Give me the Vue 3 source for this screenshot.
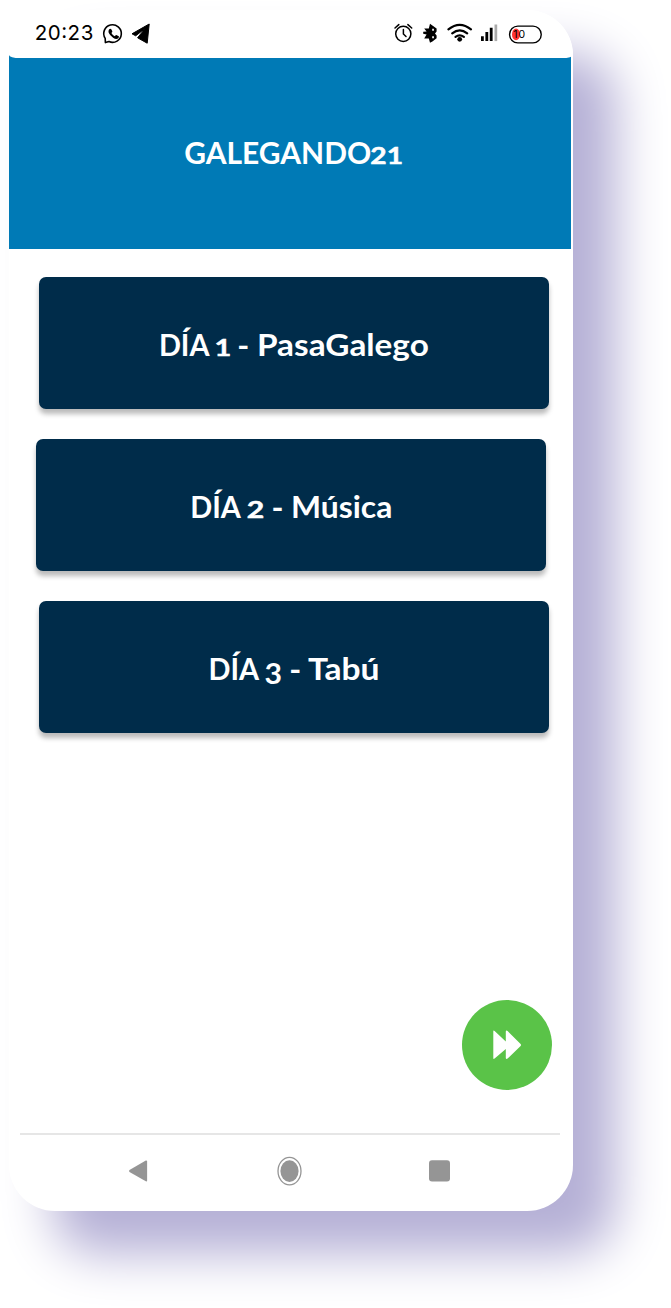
<script setup>
// Each label is set word by word: x, baseline, measured length and size.
const title = [
  { t: 'GALEGANDO', x: 175.2, y: 109, w: 187, s: 29.5 },
  { t: '21', x: 361.3, y: 109, w: 32.7, s: 23, small: true },
]

const days = [
  {
    id: 1,
    words: [
      { t: 'DÍA', x: 119.9, y: 79, w: 50.6, s: 30 },
      { t: '1', x: 175.4, y: 79, w: 16.8, s: 23, small: true },
      { t: '-', x: 198.3, y: 80, w: 12, s: 30 },
      { t: 'PasaGalego', x: 218, y: 79, w: 171.8, s: 30 },
    ],
  },
  {
    id: 2,
    shifted: true,
    words: [
      { t: 'DÍA', x: 154.2, y: 79, w: 50.6, s: 30 },
      { t: '2', x: 210.8, y: 79, w: 17.5, s: 23, small: true },
      { t: '-', x: 235.5, y: 80, w: 12, s: 30 },
      { t: 'Música', x: 255, y: 79, w: 101.3, s: 30 },
    ],
  },
  {
    id: 3,
    words: [
      { t: 'DÍA', x: 169.5, y: 79, w: 50.6, s: 30 },
      { t: '3', x: 225.5, y: 83, w: 17.5, s: 29 },
      { t: '-', x: 250.3, y: 80, w: 12, s: 30 },
      { t: 'Tabú', x: 269, y: 79, w: 71.5, s: 30 },
    ],
  },
]
</script>

<template>
  <div class="stage">
    <main class="phone">
      <div class="status">
        <svg class="status-left" width="130" height="30" viewBox="30 18 130 30">
          <text class="clock" x="34.8" y="40" textLength="58.5">20:23</text>
          <g fill="none" stroke="#000" stroke-width="1.6">
            <path d="M105.2 38.4 A8.8 8.8 0 1 1 109 41.6 L105.4 42.6 Z" stroke-linejoin="round" />
          </g>
          <path d="M109 29.5 q1.3 -1.5 2.3 -.3 l1 2 q.3 .8 -.9 1.8 q1.2 2.3 3.4 3.3 q1.2 -1.6 2 -1.1 l2 1.1 q.6 .7 -.5 1.9 q-2 1.6 -5.2 -.5 q-3.2 -2.2 -4.4 -5 q-.6 -1.9 .3 -3.2z" />
          <path d="M132 33.8 L149.2 24 L147.2 43.2 L137.6 37.8 L145.2 28.4 L135.7 35.8 Z" stroke="#000" stroke-width="1" stroke-linejoin="round" />
        </svg>
        <svg class="status-right" width="160" height="30" viewBox="390 18 160 30">
          <g fill="none" stroke="#000" stroke-width="1.5" stroke-linecap="round">
            <circle cx="403.3" cy="33.8" r="7.6" />
            <path d="M403.4 29.5 V34 L406 36.5 M395 28 L398.8 24.6 M407.9 24.6 L411.7 28" />
          </g>
          <path d="M430 23.8 L432.4 25.4 L436.6 28.6 V31.4 L435 33.4 L436.6 35.6 V38.2 L432.4 41.4 L430 42.8 L428.8 38.6 L424.2 38.6 L426.6 34.6 L423.2 33.8 V31.8 L426.6 31.4 L424.2 28.6 H428.8 Z" />
          <path d="M432.2 28.8h1.7v1.9h-1.7zM432.2 36.3h1.7v1.9h-1.7z" fill="#fff" />
          <g fill="none" stroke="#000" stroke-width="2.2" stroke-linecap="round">
            <path d="M448.4 29.3 Q459.7 20.3 471 29.3" />
            <path d="M452.2 33.3 Q459.7 27.5 467.2 33.3" />
            <path d="M455.5 36.8 Q459.7 33.9 463.9 36.8" />
          </g>
          <circle cx="459.7" cy="39.3" r="2.4" />
          <path d="M481 36.3h2.8v4.8H481zM485.4 31.9h2.8v9.2h-2.8zM489.8 27.7h2.8v13.4h-2.8z" />
          <path d="M494.5 24.5h2.7v16.6h-2.7z" fill="#aaa" />
          <rect x="509.6" y="26.1" width="31.6" height="16.8" rx="8.2" fill="#fff" stroke="#000" stroke-width="1.4" />
          <ellipse cx="516" cy="34.4" rx="4" ry="5.8" fill="#ff3333" />
          <text class="battery" x="513.2" y="38.3" textLength="12">10</text>
        </svg>
      </div>

      <header class="banner">
        <svg width="562" height="194" viewBox="0 0 562 194">
          <text v-for="w in title" :key="w.t" class="label" :class="{ small: w.small }" :x="w.x" :y="w.y" :font-size="w.s" :textLength="w.w" lengthAdjust="spacingAndGlyphs">{{ w.t }}</text>
        </svg>
      </header>

      <nav class="days">
        <button v-for="d in days" :key="d.id" class="day" :class="{ shifted: d.shifted }">
          <svg width="510" height="132" viewBox="0 0 510 132">
            <text v-for="w in d.words" :key="w.t" class="label" :class="{ small: w.small }" :x="w.x" :y="w.y" :font-size="w.s" :textLength="w.w" lengthAdjust="spacingAndGlyphs">{{ w.t }}</text>
          </svg>
        </button>
      </nav>

      <button class="next" aria-label="Next">
        <svg width="90" height="90" viewBox="0 0 90 90">
          <path d="M31.3 31.2 Q31.3 30 32.6 31 L43.8 41.5 V31.6 Q44 30 45.6 31 L58.6 43.9 Q59.4 45 58.6 46 L45.6 58.6 Q44 59.6 43.8 58 V49 L32.6 58.6 Q31.3 59.6 31.3 58.2 Z" fill="#fff" />
        </svg>
      </button>

      <footer class="bar">
        <svg width="540" height="75" viewBox="20 1135 540 75" fill="#959595">
          <path d="M129.5 1170.1 L145.8 1160.6 Q147.1 1160.3 147.1 1161.6 V1180.5 Q147.1 1181.8 145.8 1181.3 L129.5 1171.9 Q128.5 1171 129.5 1170.1Z" />
          <ellipse cx="289.5" cy="1171.1" rx="9.1" ry="10.8" />
          <ellipse cx="289.5" cy="1171.1" rx="11.5" ry="13.8" fill="none" stroke="#959595" stroke-width="1.3" />
          <rect x="429" y="1160.2" width="21" height="21.2" rx="3" />
        </svg>
      </footer>
    </main>
  </div>
</template>

<style>
body {
  background: #fff;
}
</style>

<style scoped>
.stage {
  box-sizing: border-box;
  width: 671px;
  height: 1308px;
  padding: 10px 0 0 9px;
  overflow: hidden;
}
.phone {
  display: flex;
  flex-direction: column;
  width: 564px;
  height: 1200.6px;
  border-radius: 46px;
  background: #fff;
  box-shadow: 43px 43px 50px #b5b0d6;
}
svg {
  display: block;
}
.status {
  position: relative;
  z-index: 1;
  display: flex;
  justify-content: space-between;
  box-sizing: border-box;
  height: 48px;
  padding: 8px 23px 0 21px;
  border-radius: 46px 46px 11px 11px / 46px 46px 3px 3px;
  background: #fff;
}
.clock {
  font: 20.5px Inter, sans-serif;
}
.battery {
  font: 10.5px Inter, sans-serif;
}
.banner {
  width: 562.4px;
  height: 194px;
  margin-top: -3px;
  background: #007ab6;
}
.label {
  font-family: Lato, "Open Sans", sans-serif;
  font-weight: 700;
  fill: #fff;
}
.label.small {
  stroke: #fff;
  stroke-width: 0.5px;
}
.days {
  display: flex;
  flex-direction: column;
  gap: 30px;
  padding: 28.4px 0 0 30px;
}
button {
  display: block;
  border: 0;
  padding: 0;
}
.day {
  width: 510px;
  height: 132px;
  border-radius: 7px;
  background: #002c4a;
  box-shadow: 0 5px 5px rgba(0, 0, 0, 0.27);
}
.day.shifted {
  margin-left: -3px;
}
.next {
  align-self: flex-end;
  width: 90px;
  height: 90px;
  margin: auto 21px 42.6px 0;
  border-radius: 50%;
  background: #5ac348;
}
.bar {
  flex: none;
  width: 540px;
  height: 76px;
  margin-left: 11px;
  border-top: 2px solid #e6e6e6;
}
</style>
